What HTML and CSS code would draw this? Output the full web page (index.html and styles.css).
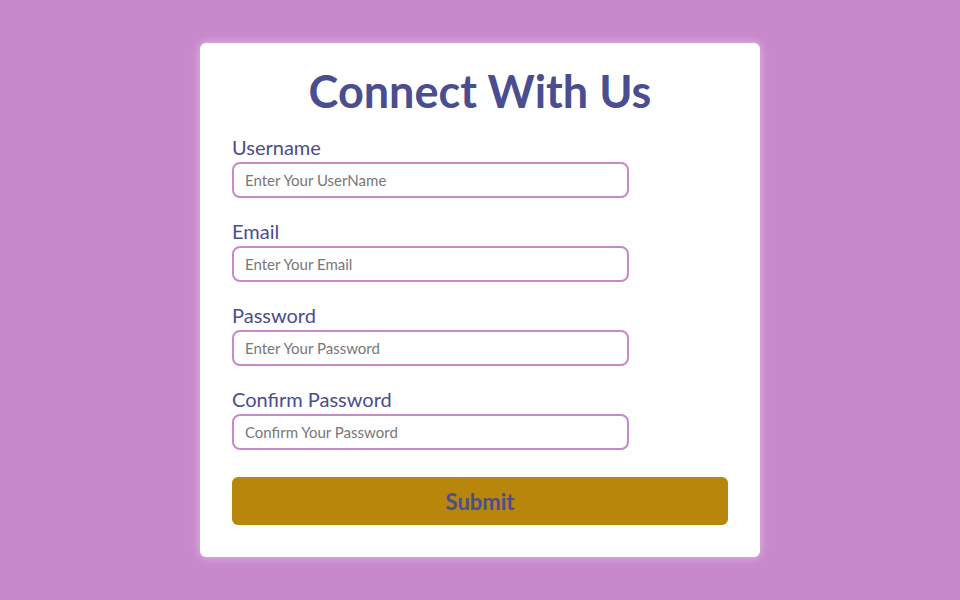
FILE: index.html
```html
<!DOCTYPE html>
<html lang="en">
<head>
<meta charset="utf-8">
<title>Connect With Us</title>
<link rel="stylesheet" href="styles.css">
</head>
<body>
<form class="card">
  <h1 class="title">Connect With Us</h1>
  <div class="field">
    <label class="label" for="u">Username</label>
    <input class="input" id="u" type="text" placeholder="Enter Your UserName">
  </div>
  <div class="field">
    <label class="label" for="e">Email</label>
    <input class="input" id="e" type="email" placeholder="Enter Your Email">
  </div>
  <div class="field">
    <label class="label" for="p">Password</label>
    <input class="input" id="p" type="password" placeholder="Enter Your Password">
  </div>
  <div class="field">
    <label class="label" for="c">Confirm Password</label>
    <input class="input" id="c" type="password" placeholder="Confirm Your Password">
  </div>
  <button class="submit" type="button">Submit</button>
</form>
</body>
</html>
```
FILE: styles.css
```css
* { box-sizing: border-box; }
html, body { margin: 0; padding: 0; }
body {
  background: #c889cc;
  min-height: 100vh;
  display: flex;
  align-items: center;
  justify-content: center;
  font-family: "Source Sans Pro", Lato, "Liberation Sans", sans-serif;
}
.card {
  width: 560px;
  background: #ffffff;
  border-radius: 6px;
  padding: 16px 32px 32px;
  box-shadow: 0 0 10px rgba(255, 255, 255, 0.45);
  display: flex;
  flex-direction: column;
}
.title {
  margin: 0 0 13px;
  font-size: 45px;
  line-height: 64px;
  font-weight: 700;
  color: #4a4d8f;
  text-align: center;
}
.field {
  display: flex;
  flex-direction: column;
  margin-bottom: 22px;
}
.label {
  font-size: 20px;
  line-height: 22px;
  color: #4a4d8f;
  margin-bottom: 4px;
}
.input {
  width: 80%;
  height: 36px;
  border: 2px solid #c889cc;
  border-radius: 8px;
  padding: 0 11px;
  font-family: inherit;
  font-size: 15px;
  color: #333;
  outline: none;
}
.input::placeholder { color: #777777; }
.submit {
  margin-top: 5px;
  height: 48px;
  border: none;
  border-radius: 6px;
  background: #b8860b;
  color: #4a4d8f;
  font-family: inherit;
  font-size: 22px;
  font-weight: 700;
}
```
